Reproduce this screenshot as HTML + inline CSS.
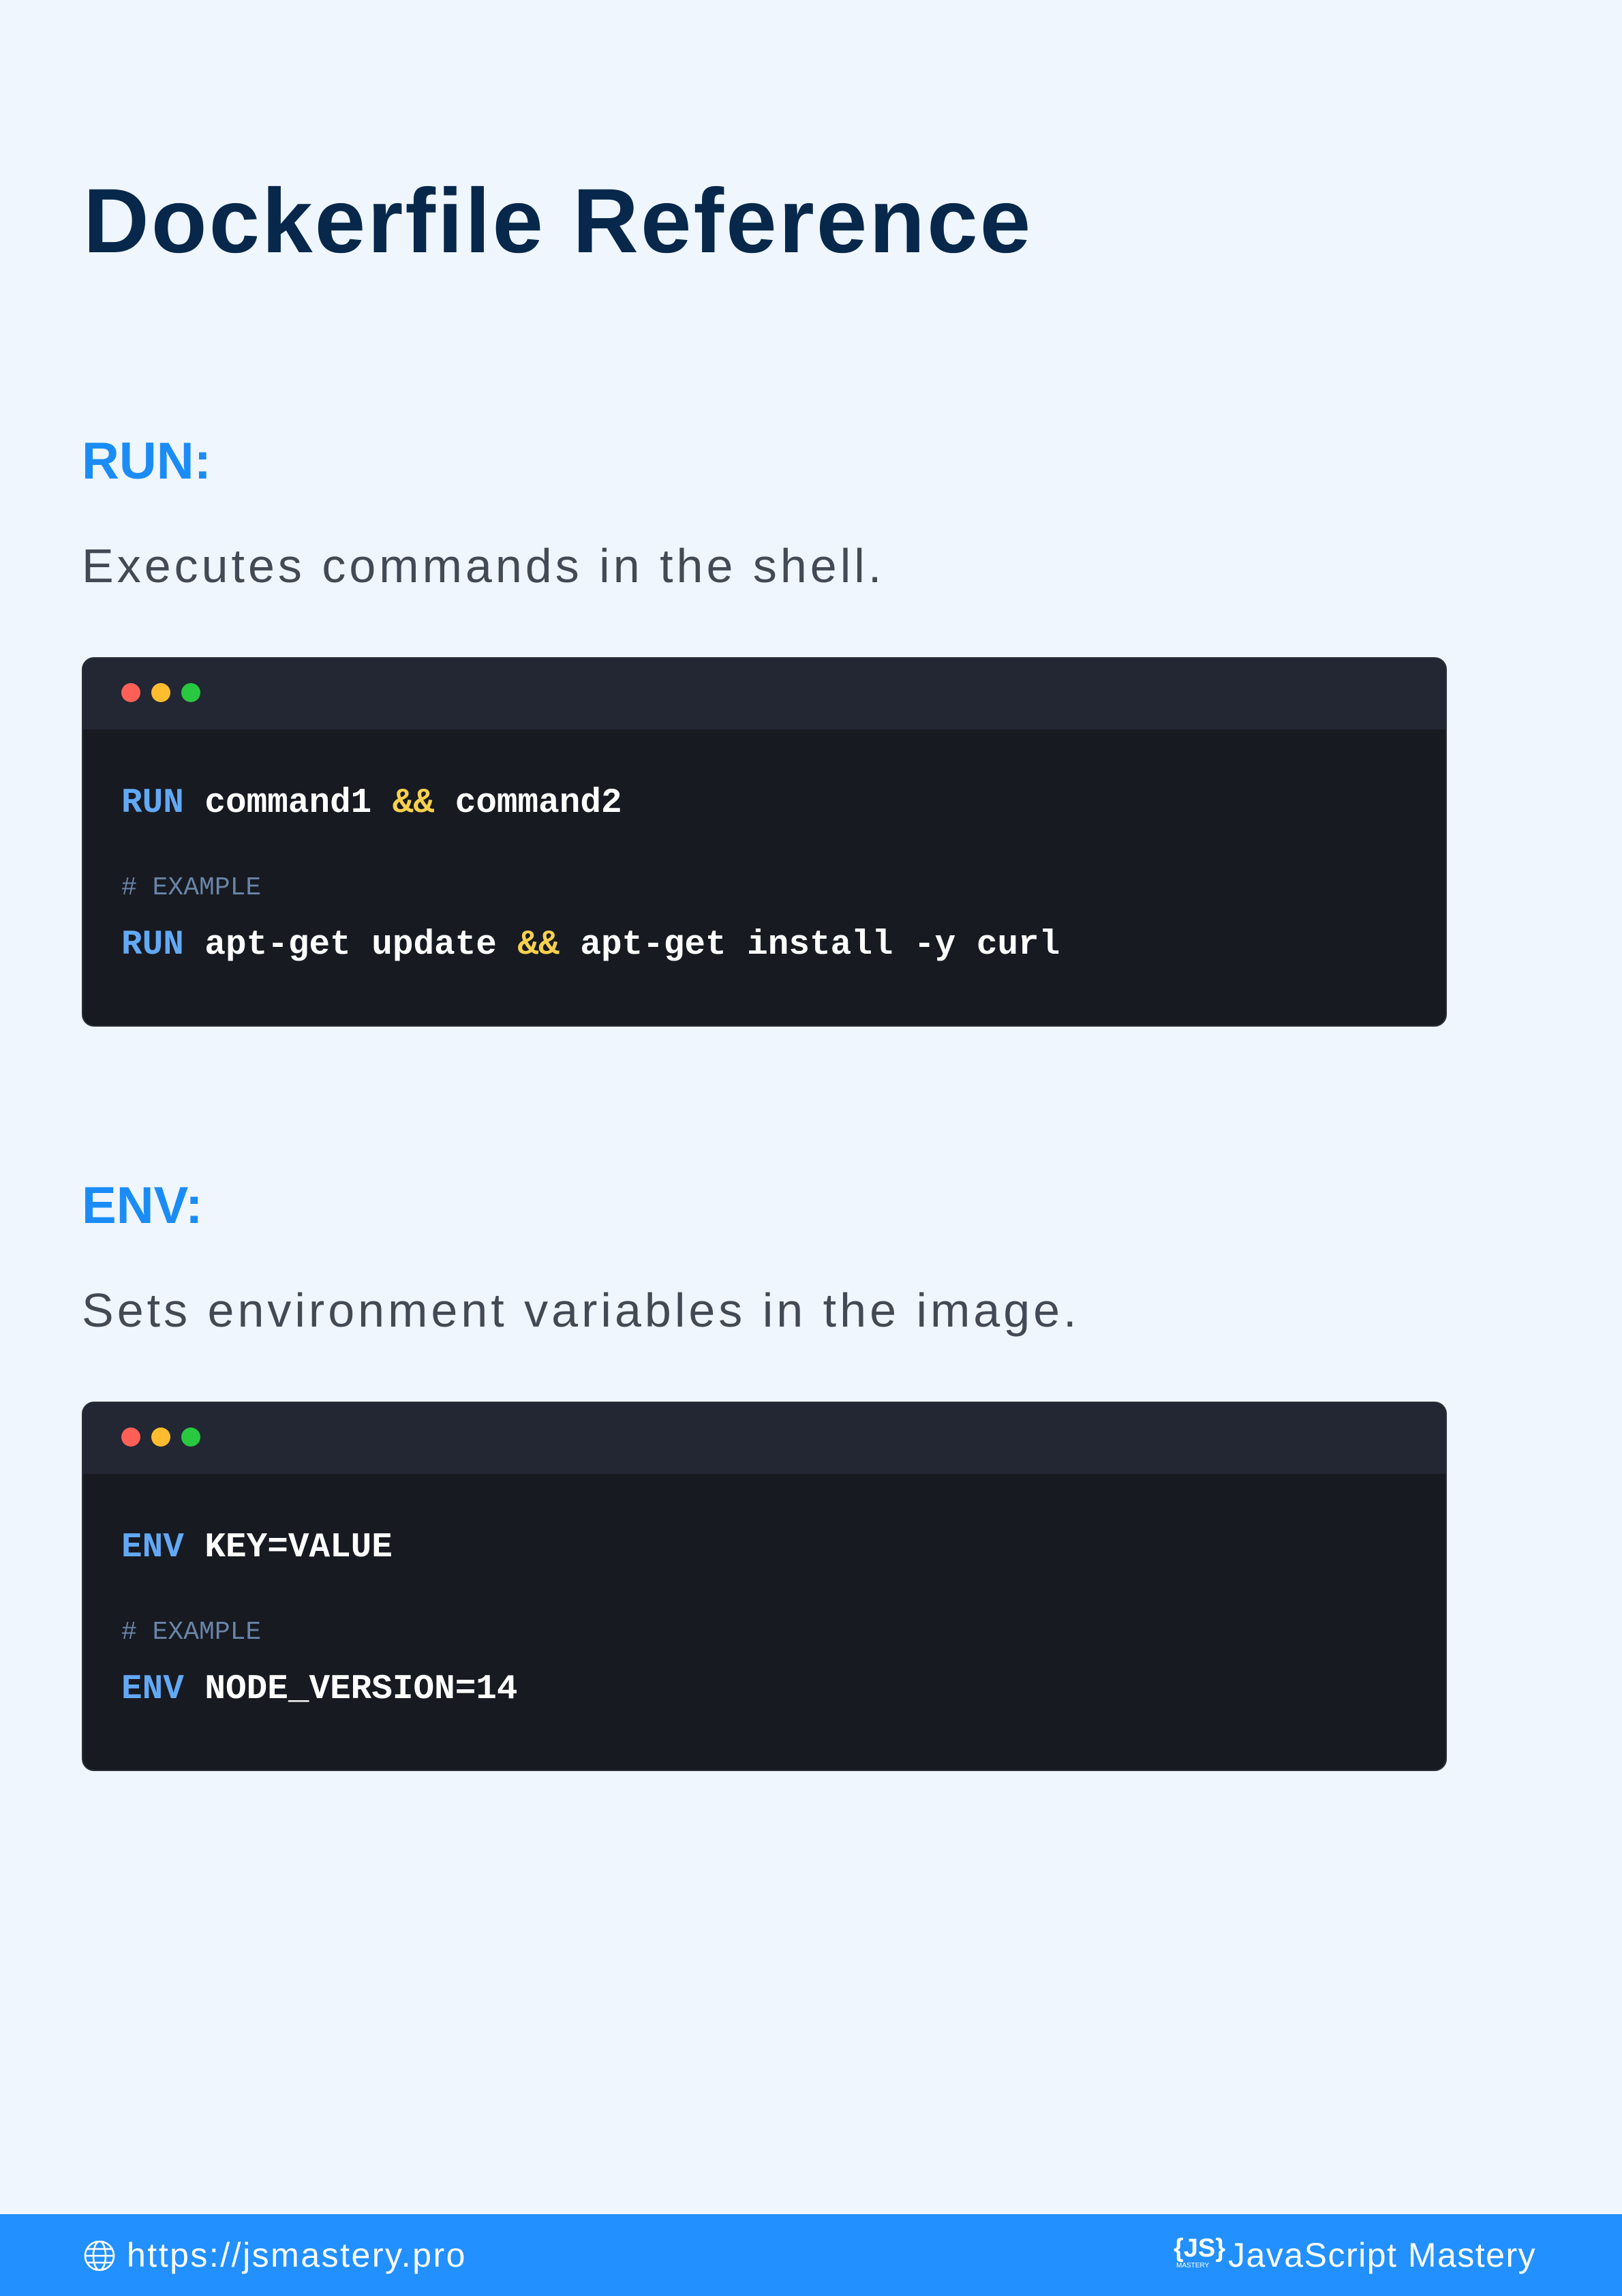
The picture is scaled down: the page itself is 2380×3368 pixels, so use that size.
<!DOCTYPE html>
<html><head><meta charset="utf-8"><style>
*{margin:0;padding:0;box-sizing:border-box}
html,body{width:2380px;height:3368px;background:#eff6fe;overflow:hidden;position:relative;font-family:"Liberation Sans",sans-serif}
.abs{position:absolute;white-space:nowrap}
.title{left:122px;top:250px;font-size:134px;font-weight:bold;color:#07284b;letter-spacing:3px;line-height:150px}
.h{left:120px;font-size:76px;font-weight:bold;color:#1b8cf5;line-height:90px}
.d{left:120px;font-size:70px;color:#434a55;line-height:84px;letter-spacing:5px}
.box{position:absolute;left:120px;width:2003px;height:542px;background:#171a21;border-radius:18px;overflow:hidden;border:2px solid #2a2f3a}
.bar{height:104px;background:#222733;position:relative}
.dot{position:absolute;top:36px;width:28px;height:28px;border-radius:50%}
.code{position:absolute;left:56px;font-family:"Liberation Mono",monospace;font-weight:bold;font-size:51px;color:#fff;white-space:pre}
.cm{position:absolute;left:56px;font-family:"Liberation Mono",monospace;font-size:38px;color:#6a84a8;white-space:pre}
.k{color:#62a9f5}.y{color:#f7d14c}
.foot{position:absolute;left:0;top:3248px;width:2380px;height:120px;background:#2290ff;color:#fff;font-size:50px}
</style></head><body>
<div class="abs title">Dockerfile Reference</div>

<div class="abs h" style="top:632px">RUN:</div>
<div class="abs d" style="top:788px">Executes commands in the shell.</div>
<div class="box" style="top:964px">
 <div class="bar"><div class="dot" style="left:56px;background:#fe5f57"></div><div class="dot" style="left:100px;background:#febc2e"></div><div class="dot" style="left:144px;background:#28c840"></div></div>
 <div class="code" style="top:184px"><span class="k">RUN</span> command1 <span class="y">&amp;&amp;</span> command2</div>
 <div class="cm" style="top:315px"># EXAMPLE</div>
 <div class="code" style="top:392px"><span class="k">RUN</span> apt-get update <span class="y">&amp;&amp;</span> apt-get install -y curl</div>
</div>

<div class="abs h" style="top:1724px">ENV:</div>
<div class="abs d" style="top:1880px">Sets environment variables in the image.</div>
<div class="box" style="top:2056px">
 <div class="bar"><div class="dot" style="left:56px;background:#fe5f57"></div><div class="dot" style="left:100px;background:#febc2e"></div><div class="dot" style="left:144px;background:#28c840"></div></div>
 <div class="code" style="top:184px"><span class="k">ENV</span> KEY=VALUE</div>
 <div class="cm" style="top:315px"># EXAMPLE</div>
 <div class="code" style="top:392px"><span class="k">ENV</span> NODE_VERSION=14</div>
</div>

<div class="foot">
 <svg style="position:absolute;left:122px;top:36px" width="48" height="50" viewBox="0 0 24 24" fill="none" stroke="#fff" stroke-width="1.3"><circle cx="12" cy="12" r="10.5"/><ellipse cx="12" cy="12" rx="4.5" ry="10.5"/><path d="M1.5 12h21M3 7h18M3 17h18"/></svg>
 <div class="abs" style="left:186px;top:30px;line-height:60px;letter-spacing:2.5px">https://jsmastery.pro</div>
 <div class="abs" style="left:1722px;top:28px;font-size:38px;font-weight:bold;line-height:44px">{JS}</div>
 <div class="abs" style="left:1726px;top:70px;font-size:10px;line-height:12px">MASTERY</div>
 <div class="abs" style="left:1802px;top:30px;line-height:60px;letter-spacing:1.5px">JavaScript Mastery</div>
</div>
</body></html>
